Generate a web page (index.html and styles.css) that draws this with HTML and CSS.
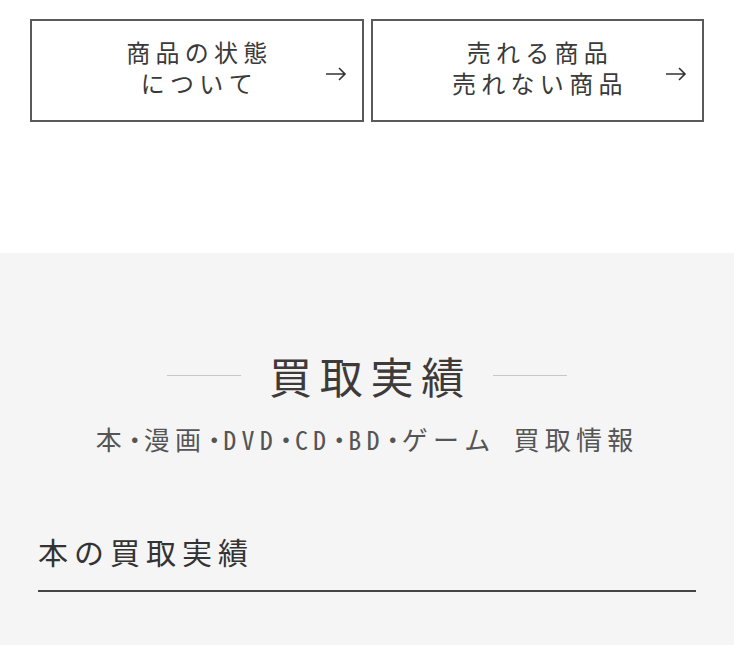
FILE: index.html
```html
<!DOCTYPE html>
<html lang="ja">
<head>
  <meta charset="UTF-8" />
  <title>買取実績</title>
  <link rel="stylesheet" href="styles.css">
</head>
<body>

  <div class="links">
    <a class="link-box" href="#">
      <span class="link-text">商品の状態<br>について</span>
      <svg class="arrow" width="22" height="14" viewBox="0 0 22 14">
        <path d="M1 7 H20 M14 1 L20 7 L14 13" fill="none" stroke="#333" stroke-width="1.6" />
      </svg>
    </a>
    <a class="link-box" href="#">
      <span class="link-text">売れる商品<br>売れない商品</span>
      <svg class="arrow" width="22" height="14" viewBox="0 0 22 14">
        <path d="M1 7 H20 M14 1 L20 7 L14 13" fill="none" stroke="#333" stroke-width="1.6" />
      </svg>
    </a>
  </div>

  <section class="results">
    <div class="results-head">
      <h2 class="results-title"><span class="rule"></span>買取実績<span class="rule"></span></h2>
      <p class="results-sub">本<span class="dot">・</span>漫画<span class="dot">・</span>DVD<span class="dot">・</span>CD<span class="dot">・</span>BD<span class="dot">・</span>ゲーム 買取情報</p>
    </div>

    <h3 class="cat-title">本の買取実績</h3>
  </section>

</body>
</html>
```

FILE: styles.css
```css
body {
  margin: 0;
  font-family: "Noto Sans Mono CJK JP", "Noto Sans CJK JP", sans-serif;
  background-color: #fff;
  color: #333;
}

.links {
  display: grid;
  grid-template-columns: 1fr 1fr;
  gap: 7px;
  padding: 19px 30px 0;
}

.link-box {
  position: relative;
  display: flex;
  align-items: center;
  justify-content: center;
  height: 103px;
  box-sizing: border-box;
  border: 2px solid #5a5a5a;
  color: #3a3a3a;
  text-decoration: none;
}

.link-text {
  font-size: 24px;
  line-height: 31px;
  letter-spacing: 0.22em;
  text-align: center;
  margin-right: -0.22em;
  margin-top: -8px;
}

.arrow {
  position: absolute;
  right: 15px;
  top: 46px;
}

.results {
  margin-top: 131px;
  background-color: #f5f5f5;
  padding: 92px 38px 60px;
}

.results-head {
  text-align: center;
}

.results-title {
  display: flex;
  align-items: center;
  justify-content: center;
  margin: 0;
  font-size: 43px;
  font-weight: 500;
  line-height: 60px;
  letter-spacing: 0.18em;
  color: #3e3a39;
}

.rule {
  display: block;
  width: 74px;
  height: 1px;
  background-color: #c8c8c8;
  margin: 0 28px;
}

.rule:last-child {
  margin-left: 21px;
}

.results-sub {
  margin: 16px 0 0;
  font-size: 26px;
  line-height: 36px;
  letter-spacing: 0.2em;
  color: #555;
}

.results-sub .dot {
  letter-spacing: 0;
  margin: 0 -4px 0 -5px;
}

.cat-title {
  margin: 74px 0 0;
  padding-bottom: 19px;
  font-size: 30px;
  font-weight: 400;
  line-height: 40px;
  letter-spacing: 0.2em;
  color: #333;
  text-align: left;
  border-bottom: 2px solid #444;
}
```
